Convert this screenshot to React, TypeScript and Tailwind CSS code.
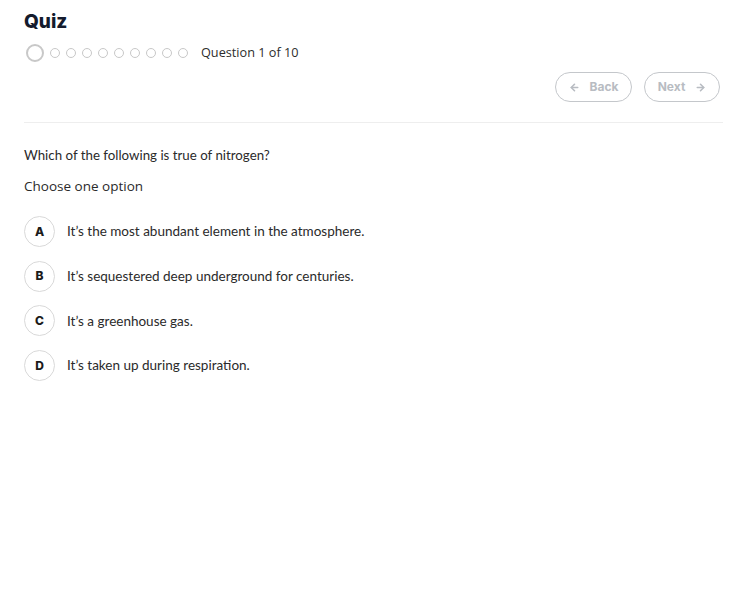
import { ArrowLeft, ArrowRight } from "lucide-react";

const options = [
  { key: "A", text: "It’s the most abundant element in the atmosphere." },
  { key: "B", text: "It’s sequestered deep underground for centuries." },
  { key: "C", text: "It’s a greenhouse gas." },
  { key: "D", text: "It’s taken up during respiration." },
];

export default function App() {
  return (
    <div className="w-full min-h-[615px] bg-white pl-6 pr-[14px] pt-2 font-['Lato',sans-serif] text-[#1f2328]">
      {/* Header */}
      <h1 className="text-[19px] font-extrabold leading-[28px] text-[#141b2d] font-['Inter',sans-serif]">Quiz</h1>

      <div className="mt-[7px] flex items-center">
        <div className="flex items-center gap-[6px] pl-[2px]">
          <span className="w-[18px] h-[18px] rounded-full border-2 border-[#c8c8c8]" />
          {Array.from({ length: 9 }).map((_, i) => (
            <span key={i} className="w-[10px] h-[10px] rounded-full border border-[#c8c8c8]" />
          ))}
        </div>
        <span className="ml-[13px] text-[12.7px] text-[#2d2d2d] font-['Open_Sans',sans-serif]">Question 1 of 10</span>
      </div>

      <div className="mt-[10px] flex justify-end gap-3 pr-[3px]">
        <button className="flex items-center gap-[10px] h-[30px] w-[77px] justify-center rounded-full border border-[#c4c7cb] text-[12px] font-bold text-[#b8bcc2] font-['Inter',sans-serif]">
          <ArrowLeft size={11} strokeWidth={3.5} />
          Back
        </button>
        <button className="flex items-center gap-[10px] h-[30px] w-[76px] justify-center rounded-full border border-[#c4c7cb] text-[12px] font-bold text-[#b8bcc2] font-['Inter',sans-serif]">
          Next
          <ArrowRight size={11} strokeWidth={3.5} />
        </button>
      </div>

      <div className="mt-[20px] border-t border-[#eeeeee]" />

      {/* Question */}
      <p className="mt-[23px] text-[13.3px] leading-[18px] text-[#2a2a2a]">Which of the following is true of nitrogen?</p>
      <p className="mt-[13px] text-[13.5px] leading-[18px] text-[#2a2a2a] font-['Open_Sans',sans-serif]">Choose one option</p>

      <ul className="mt-[21px] flex flex-col gap-[13.7px]">
        {options.map((o) => (
          <li key={o.key} className="flex items-center gap-3">
            <span className="w-[31px] h-[31px] shrink-0 rounded-full border border-[#d9d9d9] flex items-center justify-center text-[12px] font-extrabold text-[#1b1b1b] font-['Inter',sans-serif]">
              {o.key}
            </span>
            <span className="text-[13.5px] text-[#2a2a2a]">{o.text}</span>
          </li>
        ))}
      </ul>
    </div>
  );
}
